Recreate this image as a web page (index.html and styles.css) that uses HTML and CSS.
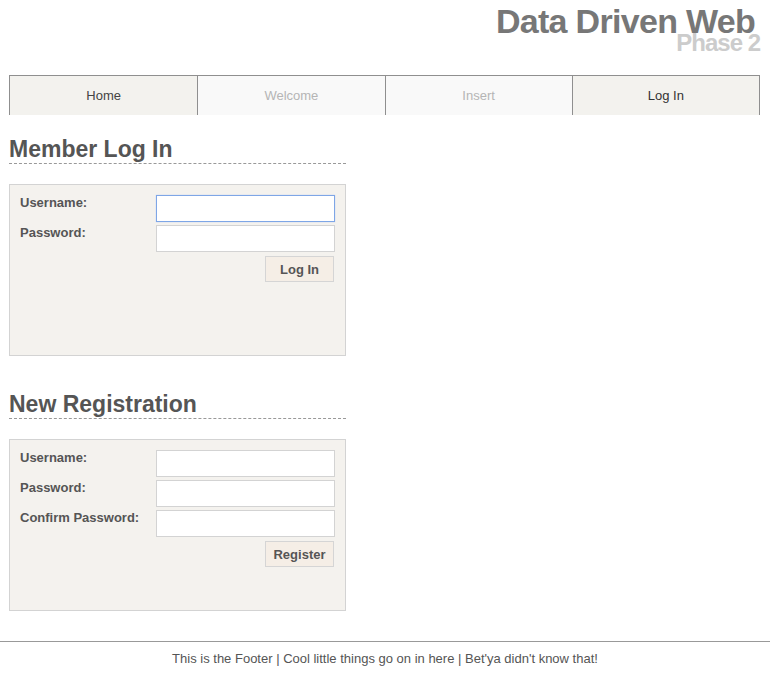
FILE: index.html
```html
<!DOCTYPE html>
<html lang="en">
<head>
<meta charset="utf-8">
<title>Data Driven Web - Log In</title>
<link rel="stylesheet" href="styles.css">
</head>
<body>
<header class="masthead">
  <h1 class="site-title">Data Driven Web</h1>
  <div class="site-sub">Phase 2</div>
</header>
<nav class="nav">
  <a class="nav-item nav-on" href="#">Home</a>
  <a class="nav-item nav-off" href="#">Welcome</a>
  <a class="nav-item nav-off" href="#">Insert</a>
  <a class="nav-item nav-cur" href="#">Log In</a>
</nav>
<main class="content">
  <section class="panel">
    <h2 class="panel-title">Member Log In</h2>
    <form class="form-box">
      <div class="form-grid">
        <label class="lbl">Username:</label>
        <input class="field" type="text" autofocus>
        <label class="lbl">Password:</label>
        <input class="field" type="password">
      </div>
      <div class="actions"><button class="btn" type="button">Log In</button></div>
    </form>
  </section>
  <section class="panel panel-second">
    <h2 class="panel-title">New Registration</h2>
    <form class="form-box">
      <div class="form-grid">
        <label class="lbl">Username:</label>
        <input class="field" type="text">
        <label class="lbl">Password:</label>
        <input class="field" type="password">
        <label class="lbl">Confirm Password:</label>
        <input class="field" type="password">
      </div>
      <div class="actions"><button class="btn" type="button">Register</button></div>
    </form>
  </section>
</main>
<footer class="footer">This is the Footer | Cool little things go on in here | Bet'ya didn't know that!</footer>
</body>
</html>
```
FILE: styles.css
```css
html, body {
  margin: 0;
  padding: 0;
  background: #fff;
  font-family: "Liberation Sans", Arial, sans-serif;
  color: #555;
}
.masthead {
  text-align: right;
  height: 75px;
}
.site-title {
  margin: 0;
  padding: 4px 15px 0 0;
  font-size: 34px;
  line-height: 34px;
  font-weight: bold;
  letter-spacing: -0.7px;
  color: #777;
}
.site-sub {
  position: relative;
  margin-top: -7px;
  padding-right: 10px;
  font-size: 24px;
  line-height: 24px;
  font-weight: bold;
  letter-spacing: -1px;
  color: #ccc;
}
.nav {
  display: grid;
  grid-template-columns: repeat(4, 1fr);
  margin: 0 10px 0 9px;
  border-top: 1px solid #8f8f8f;
  border-right: 1px solid #8f8f8f;
  border-left: 1px solid #8f8f8f;
}
.nav-item {
  display: block;
  height: 39px;
  line-height: 39px;
  text-align: center;
  font-size: 13px;
  text-decoration: none;
  border-left: 1px solid #8f8f8f;
}
.nav-item:first-child { border-left: none; }
.nav-on { background: #f3f2ee; color: #444; }
.nav-off { background: #f9f9f9; color: #b5b5b5; }
.nav-cur { background: #f3f2ee; color: #333; }
.content {
  margin-left: 9px;
  width: 337px;
}
.panel-title {
  margin: 21px 0 0;
  padding-bottom: 1px;
  font-size: 23px;
  line-height: 26px;
  font-weight: bold;
  color: #555;
  border-bottom: 1px dashed #999;
}
.panel-second .panel-title { margin-top: 35px; }
.form-box {
  box-sizing: border-box;
  height: 172px;
  margin-top: 20px;
  padding: 10px;
  background: #f4f2ee;
  border: 1px solid #d3d3d3;
}
.form-grid {
  display: grid;
  grid-template-columns: 136px 1fr;
  row-gap: 3px;
  align-items: start;
}
.lbl {
  font-size: 13px;
  line-height: 16px;
  font-weight: bold;
  color: #555;
}
.field {
  box-sizing: border-box;
  height: 27px;
  width: 100%;
  margin: 0;
  padding: 0 5px;
  background: #fff;
  border: 1px solid #d3d3d3;
  border-radius: 0;
  font-family: "Liberation Sans", Arial, sans-serif;
  font-size: 13px;
  color: #333;
  outline: none;
}
.field:focus {
  border-color: #7ea6e6;
  box-shadow: 0 0 1px #a9c4ef;
}
.actions {
  display: flex;
  justify-content: flex-end;
  padding-right: 1px;
  margin-top: 4px;
}
.btn {
  box-sizing: border-box;
  width: 69px;
  height: 26px;
  margin: 0;
  padding: 0;
  background: #f5eee6;
  border: 1px solid #d5d5d5;
  border-radius: 0;
  font-family: "Liberation Sans", Arial, sans-serif;
  font-size: 13px;
  font-weight: bold;
  color: #555;
}
.footer {
  margin-top: 30px;
  padding-top: 9px;
  border-top: 1px solid #999;
  text-align: center;
  font-size: 13px;
  line-height: 16px;
  color: #555;
}
```
